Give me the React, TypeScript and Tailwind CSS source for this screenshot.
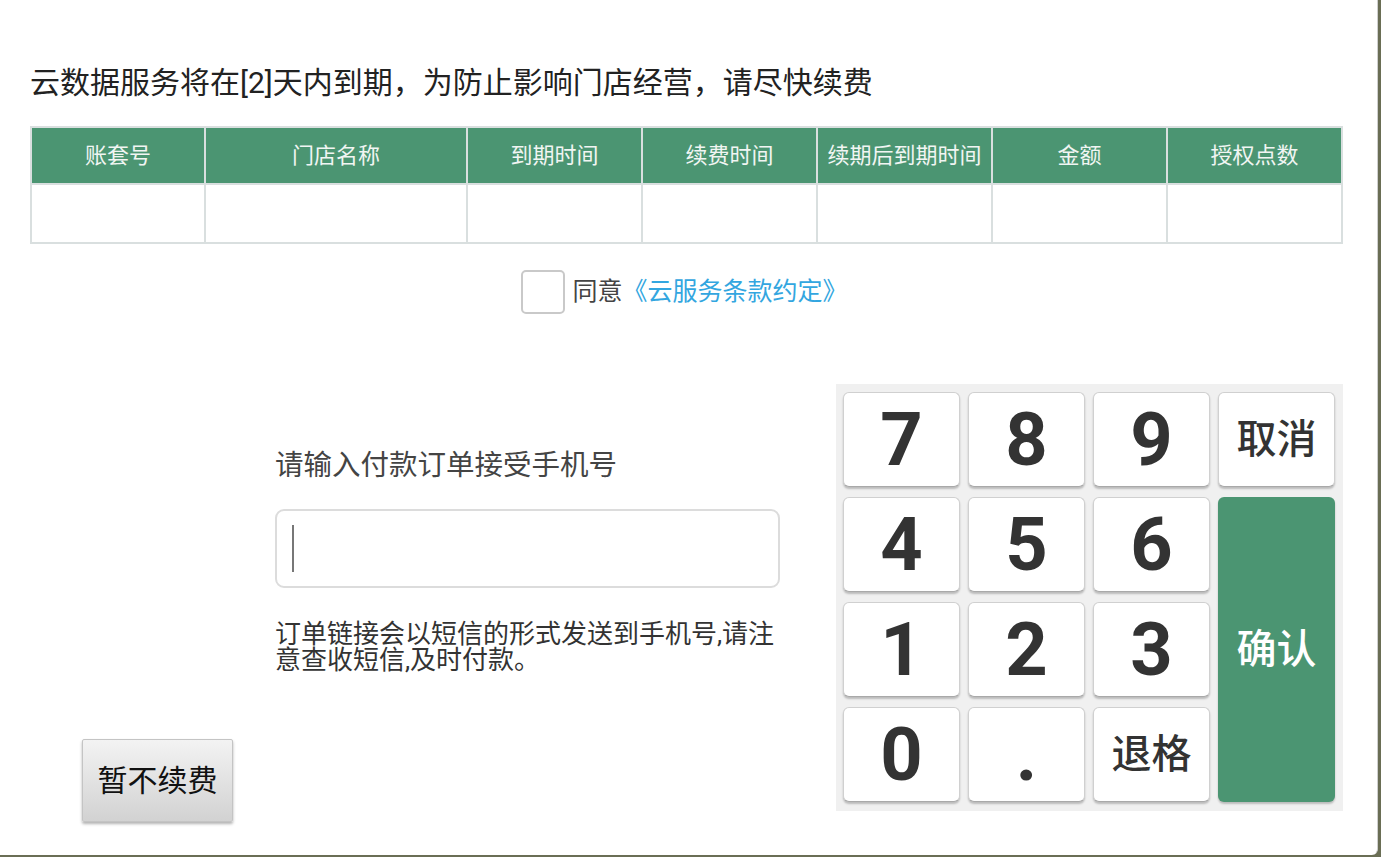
const headers = ["账套号", "门店名称", "到期时间", "续费时间", "续期后到期时间", "金额", "授权点数"];

const keys = ["7", "8", "9", "4", "5", "6", "1", "2", "3", "0", ".", "退格"];

const Key = ({ label }: { label: string }) => {
  const isText = label.length > 1;
  return (
    <button
      className={
        "bg-white rounded-[6px] border border-[#d0d0d0] border-b-[#a9a9a9] shadow-[0_2px_2px_rgba(0,0,0,0.22)] flex items-center justify-center text-[#333] " +
        (isText ? "text-[40px] font-medium" : "text-[74px] font-bold")
      }
    >
      {label}
    </button>
  );
};

export default function App() {
  return (
    <div className="w-[1381px] h-[857px] bg-[#6a6e55] overflow-hidden font-['Roboto','Noto_Sans_CJK_SC',sans-serif]">
      <div className="w-[1378px] h-[855px] bg-white rounded-br-[6px] border-r border-[#cfcfcf] pl-[30px] pr-[34px] flex flex-col">
        <div className="pt-[63px] h-[103px] text-[30px] leading-[40px] text-[#222]">
          云数据服务将在[2]天内到期，为防止影响门店经营，请尽快续费
        </div>

        <div className="mt-[23px] grid grid-cols-[172px_260px_173px_173px_173px_173px_1fr] grid-rows-[55px_57px] gap-[2px] p-[2px] bg-[#d9dfdf]">
          {headers.map((h) => (
            <div key={h} className="bg-[#4b9572] text-[#f1f5f3] text-[22px] flex items-center justify-center">
              {h}
            </div>
          ))}
          {headers.map((h) => (
            <div key={"c" + h} className="bg-white" />
          ))}
        </div>

        <div className="mt-[26px] flex items-center justify-center pr-[4px]">
          <div className="w-[44px] h-[44px] rounded-[5px] border-2 border-[#c9c9c9] bg-white" />
          <span className="ml-[7px] text-[25px] text-[#444]">同意</span>
          <span className="text-[25px] text-[#33a6e0]">《云服务条款约定》</span>
        </div>

        <div className="mt-[70px] flex">
          <div className="flex-1 flex flex-col">
            <div className="pl-[245px] flex flex-col">
              <div className="mt-[64px] text-[28.5px] leading-[36px] text-[#444]">请输入付款订单接受手机号</div>
              <div className="mt-[25px] w-[505px] h-[79px] rounded-[9px] border-2 border-[#dcdcdc] flex items-center pl-[15px]">
                <div className="w-[2px] h-[47px] bg-[#777]" />
              </div>
              <div className="mt-[33px] w-[505px] text-[26px] leading-[26px] text-[#333]">
                订单链接会以短信的形式发送到手机号,请注意查收短信,及时付款。
              </div>
            </div>
            <div className="pl-[52px] mt-[66px]">
              <button className="w-[151px] h-[83px] rounded-[2px] border border-[#c4c4c4] bg-gradient-to-b from-[#f3f3f3] to-[#d2d2d2] shadow-[0_2px_3px_rgba(0,0,0,0.3)] text-[30px] text-[#111]">
                暂不续费
              </button>
            </div>
          </div>

          <div className="w-[507px] h-[427px] bg-[#f0f0f0] pt-[8px] pl-[7px] pr-[8px] pb-[9px] grid grid-cols-[117px_117px_117px_117px] grid-rows-[95px_95px_95px_95px] gap-x-[8px] gap-y-[10px]">
            <Key label="7" />
            <Key label="8" />
            <Key label="9" />
            <button className="bg-white rounded-[6px] border border-[#d0d0d0] border-b-[#a9a9a9] shadow-[0_2px_2px_rgba(0,0,0,0.22)] flex items-center justify-center text-[#333] text-[40px] font-medium">
              取消
            </button>
            {keys.slice(3, 6).map((k) => (
              <Key key={k} label={k} />
            ))}
            <button className="row-span-3 bg-[#4b9572] rounded-[6px] shadow-[0_2px_2px_rgba(0,0,0,0.22)] flex items-center justify-center text-white text-[40px] font-medium">
              确认
            </button>
            {keys.slice(6).map((k) => (
              <Key key={k} label={k} />
            ))}
          </div>
        </div>
      </div>
    </div>
  );
}
